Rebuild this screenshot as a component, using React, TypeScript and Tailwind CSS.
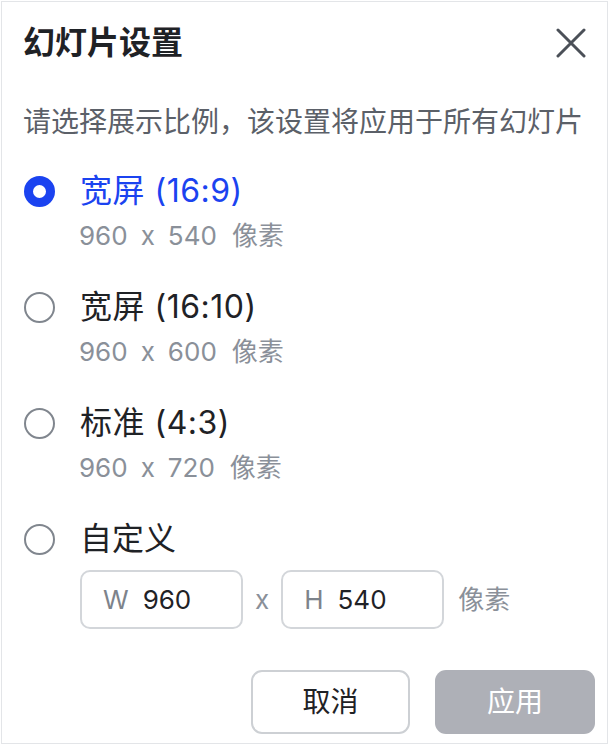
import { useState } from "react";

const FONT = { fontFamily: 'Inter, "Noto Sans CJK SC", sans-serif' };

const OPTIONS = [
  { id: "16:9", label: "宽屏 (16:9)", w: "960", h: "540" },
  { id: "16:10", label: "宽屏 (16:10)", w: "960", h: "600" },
  { id: "4:3", label: "标准 (4:3)", w: "960", h: "720" },
];

function Radio({ checked }: { checked: boolean }) {
  return checked ? (
    <span className="block h-[31px] w-[31px] shrink-0 rounded-full border-[9px] border-[#1b43f0] bg-white" />
  ) : (
    <span className="block h-[31px] w-[31px] shrink-0 rounded-full border-2 border-[#80868e] bg-white" />
  );
}

function SizeInput({ prefix, value }: { prefix: string; value: string }) {
  return (
    <div className="flex h-[59px] w-[163px] items-center rounded-[10px] border-2 border-[#d3d6da] pl-[21px]">
      <span className="text-[26px] text-[#7d838b]">{prefix}</span>
      <span className="ml-[14px] text-[26px] text-[#1f2226]">{value}</span>
    </div>
  );
}

export default function App() {
  const [selected, setSelected] = useState("16:9");

  return (
    <div className="ml-px mt-px h-[743px] w-[607px] border border-[#e3e5e8] bg-white" style={FONT}>
      {/* Header */}
      <div className="mt-[21px] flex h-[40px] items-center justify-between pl-[21px] pr-[20px]">
        <h1 className="text-[32px] font-semibold leading-[40px] text-[#1f2226]">幻灯片设置</h1>
        <button type="button" className="flex h-[32px] w-[32px] items-center justify-center">
          <svg width="30" height="30" viewBox="0 0 30 30" fill="none">
            <path d="M2 2L28 28M28 2L2 28" stroke="#4b5058" strokeWidth="3" strokeLinecap="round" />
          </svg>
        </button>
      </div>

      <p className="mt-[39px] pl-[21px] text-[28px] leading-[40px] text-[#5b6068]">
        请选择展示比例，该设置将应用于所有幻灯片
      </p>

      {/* Options */}
      <div className="mt-[29px] pl-[22px]">
        {OPTIONS.map((opt) => {
          const active = selected === opt.id;
          return (
            <div
              key={opt.id}
              className="mb-[34px] cursor-pointer"
              onClick={() => setSelected(opt.id)}
            >
              <div className="flex h-[40px] items-center">
                <Radio checked={active} />
                <span
                  className={
                    active
                      ? "ml-[25px] text-[32px] leading-[40px] tracking-[0.5px] text-[#1b43f0]"
                      : "ml-[25px] text-[32px] leading-[40px] tracking-[0.5px] text-[#1f2226]"
                  }
                >
                  {opt.label}
                </span>
              </div>
              <div className="mt-[6px] flex h-[36px] items-center gap-[13px] pl-[55px] text-[26px] text-[#8a9099]">
                <span>{opt.w}</span>
                <span>x</span>
                <span>{opt.h}</span>
                <span className="ml-[2px]">像素</span>
              </div>
            </div>
          );
        })}

        {/* Custom */}
        <div className="cursor-pointer" onClick={() => setSelected("custom")}>
          <div className="flex h-[40px] items-center">
            <Radio checked={selected === "custom"} />
            <span
              className={
                selected === "custom"
                  ? "ml-[25px] text-[32px] leading-[40px] text-[#1b43f0]"
                  : "ml-[25px] text-[32px] leading-[40px] text-[#1f2226]"
              }
            >
              自定义
            </span>
          </div>
        </div>
        <div className="mt-[11px] flex items-center pl-[56px]">
          <SizeInput prefix="W" value="960" />
          <span className="mx-[12px] text-[26px] text-[#8a9099]">x</span>
          <SizeInput prefix="H" value="540" />
          <span className="ml-[14px] text-[26px] text-[#8a9099]">像素</span>
        </div>
      </div>

      {/* Footer */}
      <div className="mt-[41px] flex justify-end gap-[25px] pr-[12px]">
        <button
          type="button"
          className="h-[64px] w-[159px] rounded-[11px] border-2 border-[#cdd0d4] bg-white text-[28px] text-[#1f2226]"
        >
          取消
        </button>
        <button
          type="button"
          className="h-[64px] w-[160px] rounded-[11px] bg-[#aeb0b7] text-[28px] text-white"
        >
          应用
        </button>
      </div>
    </div>
  );
}
